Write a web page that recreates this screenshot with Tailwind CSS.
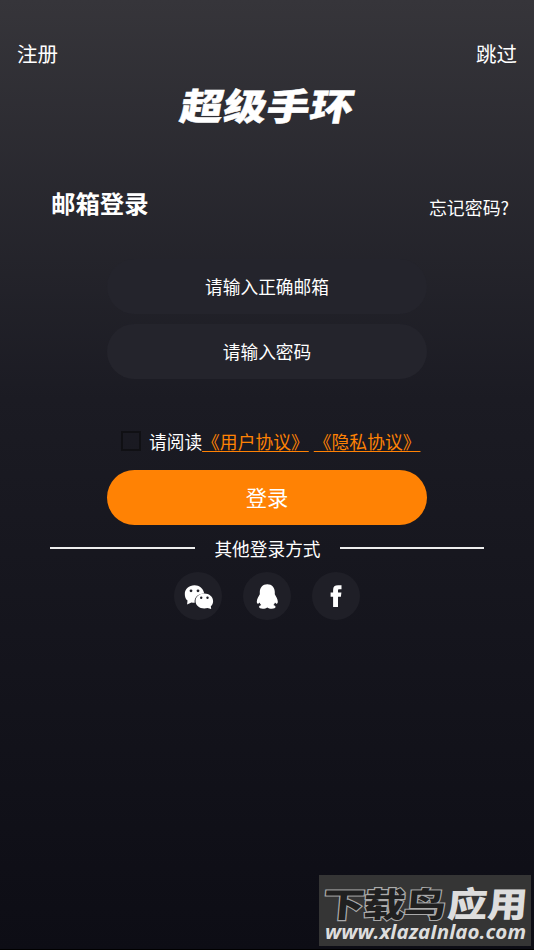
<!DOCTYPE html>
<html lang="zh-CN">
<head>
<meta charset="utf-8">
<title>超级手环</title>
<script src="https://cdn.jsdelivr.net/npm/@tailwindcss/browser@4"></script>
</head>
<body class="font-['Noto_Sans_CJK_SC',sans-serif] text-white">
<main class="relative flex h-[950px] w-[534px] flex-col overflow-hidden border-b border-black bg-linear-to-b from-[#36353a] from-0% via-[#1b1b23] via-42% to-[#0d0d15] to-100%">
  <header class="mt-[38px] flex h-[30px] items-center justify-between px-[17px] text-[20.5px] leading-[30px]">
    <a>注册</a><a>跳过</a>
  </header>
  <h1 class="mt-[8px] flex h-[58px] justify-center">
    <svg class="h-[58px] w-[210px] overflow-visible" viewBox="0 0 210 58"><text transform="translate(16.500 44) skewX(-10) scale(1.100 .94)" x="0" y="0" textLength="157" fill="#fff" stroke="#fff" stroke-width=".5" font-size="39" font-weight="900">超级手环</text></svg>
  </h1>
  <div class="mt-[49px] flex h-[40px] items-center justify-between pr-[25px] pl-[51px]">
    <h2 class="text-[24.4px] leading-[40px] font-bold">邮箱登录</h2>
    <a class="pt-[8px] text-[17.9px] leading-[32px]">忘记密码?</a>
  </div>
  <form class="flex flex-col items-center text-[17.7px]">
    <div class="mt-[36px] flex h-[55px] w-[320px] items-center justify-center rounded-full bg-[#24242c]">请输入正确邮箱</div>
    <div class="mt-[10px] flex h-[55px] w-[320px] items-center justify-center rounded-full bg-[#24242c]">请输入密码</div>
    <div class="mt-[47px] ml-[121px] flex h-[30px] w-[310px] items-center self-start leading-[30px] whitespace-nowrap">
      <span class="mr-[8px] h-5 w-5 shrink-0 border-2 border-[#101014]"></span>
      <span>请阅读</span><a class="text-[17.8px] text-[#ff8204] underline decoration-[#ff8204] decoration-1 underline-offset-[2px] [text-decoration-skip-ink:none]">《用户协议》</a><a class="ml-[5px] text-[17.8px] text-[#ff8204] underline decoration-[#ff8204] decoration-1 underline-offset-[2px] [text-decoration-skip-ink:none]">《隐私协议》</a>
    </div>
    <button type="button" class="mt-[14px] h-[55px] w-[320px] rounded-full bg-[#ff8204] pb-[2px] text-[21.3px]">登录</button>
  </form>
  <div class="mt-[9px] ml-[50px] flex h-[28px] w-[434px] items-center justify-between text-[17.7px] leading-[28px]">
    <span class="h-[2px] w-[145px] bg-[#eee]"></span><span>其他登录方式</span><span class="h-[2px] w-[144px] bg-[#eee]"></span>
  </div>
  <div class="mt-[10px] flex justify-center gap-[21px]">
    <span class="h-12 w-12 rounded-full bg-[#1f1f27]"><svg viewBox="0 0 48 48" fill="#fff"><path d="M20.500 13.300c-5.500 0-9.700 3.700-9.700 8.600 0 2.900 1 5.300 2.700 6.700l-.4 4 4.300-2.200c1 .2 2.100.3 3.300.3-.8-5.400 3.600-9.300 9.500-9.300-.8-4.800-4.800-8.100-9.700-8.100Z"/><path d="M30.300 21.400c-5 0-8.800 3.300-8.800 7.500s3.800 7.500 8.800 7.500c1.200 0 2.300-.2 3.200-.5l3.700 1.200-.4-2.900c1.600-1.400 2.300-3.100 2.300-5.300 0-4.200-3.800-7.500-8.800-7.500Z"/><g fill="#1f1f27"><circle cx="17" cy="18.800" r="1.400"/><circle cx="24" cy="18.800" r="1.400"/><circle cx="27.200" cy="25.800" r="1.200"/><circle cx="33.500" cy="25.800" r="1.200"/></g></svg></span>
    <span class="h-12 w-12 rounded-full bg-[#1f1f27]"><svg viewBox="0 0 48 48" fill="#fff"><path d="M24.300 12.300c-4.700 0-7.500 3.500-7.500 7.800v2.200c-.8 1.800-3 4.700-3 7.200 0 1.400.4 2.200 1 2.200.7 0 1.300-.8 1.800-1.300.3 1 .9 1.900 1.600 2.700-1.500.5-2.100 1-2.100 1.900 0 1.200 1.600 1.700 3.600 1.700s3.600-.5 4.600-1.300c1 .8 2.600 1.300 4.600 1.300s3.600-.5 3.600-1.700c0-.9-.6-1.400-2.100-1.900.7-.8 1.300-1.700 1.600-2.700.5.500 1.100 1.300 1.800 1.300.6 0 1-.8 1-2.200 0-2.500-2.200-5.400-3-7.200v-2.200c0-4.300-2.800-7.800-7.500-7.800Z"/></svg></span>
    <span class="h-12 w-12 rounded-full bg-[#1f1f27]"><svg viewBox="0 0 48 48" fill="#fff"><path d="M29.500 13.300v3.900h-2.200c-1 0-1.300.4-1.300 1.300v2h3.400l-.5 4.200H26v10.300h-4.900V24.700h-2.500v-4.200h2.500V18c0-3.300 1.600-4.700 5-4.700Z"/></svg></span>
  </div>
  <aside class="absolute top-[875px] left-[319px] h-[71px] w-[212px] bg-[#353535]">
    <svg class="h-full w-full" viewBox="0 0 212 71">
      <text transform="translate(3 41.500) skewX(-5) scale(1.160 .94)" textLength="106" font-size="36" font-weight="900" fill="#202020" stroke="#aaa" stroke-width="2.200" paint-order="stroke">下载鸟</text>
      <text transform="translate(127.500 41.500) skewX(-5) scale(1.080 .94)" textLength="74" font-size="37" font-weight="900" fill="#ddd">应用</text>
      <text x="6" y="64" textLength="201" lengthAdjust="spacingAndGlyphs" font-family="Open Sans, sans-serif" font-style="italic" font-size="20" font-weight="700" fill="#ddd">www.xlazaInlao.com</text>
    </svg>
  </aside>
</main>
</body>
</html>
